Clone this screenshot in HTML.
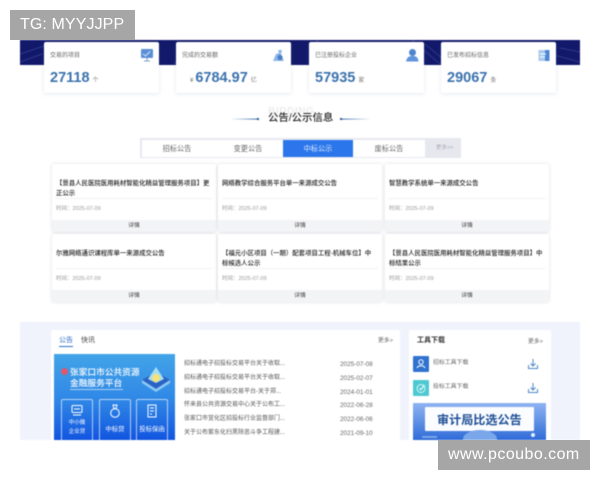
<!DOCTYPE html>
<html lang="zh"><head><meta charset="utf-8"><title>公告</title>
<style>
html,body{margin:0;padding:0;background:#fff}
#p{position:relative;width:600px;height:480px;overflow:hidden;background:#fff;font-family:"Liberation Sans","Noto Sans CJK SC",sans-serif;color:#444}
#b{position:absolute;left:0;top:0;width:600px;height:480px;filter:blur(.45px)}
.a{position:absolute;white-space:nowrap}
.stat{position:absolute;top:42px;width:115px;height:51px;background:#fff;border-radius:2px;box-shadow:0 1px 4px rgba(90,110,160,.16)}
.stat .l{position:absolute;left:6px;top:10px;font-size:6px;line-height:9px;color:#666;white-space:nowrap}
.stat .n{position:absolute;left:6px;top:28px;font-size:14.5px;line-height:17px;font-weight:bold;color:#3b72ad;white-space:nowrap}
.stat .n small{font-size:6px;font-weight:normal;color:#777;margin-left:3px}
.stat svg{position:absolute;left:96px;top:6px}
.c{position:absolute;width:164px;height:68px;background:#fff;box-shadow:0 0 3px rgba(80,90,120,.2);border-radius:2px;overflow:hidden}
.c .t{position:absolute;left:4px;top:15px;width:155px;font-size:6.4px;line-height:9.5px;color:#222;font-weight:500}
.c .ln{position:absolute;left:4px;right:4px;top:34px;height:1px;background:#f1f1f3}
.c .d{position:absolute;left:4px;top:41px;font-size:5.5px;line-height:8px;color:#999;white-space:nowrap}
.c .x{position:absolute;left:0;right:0;bottom:0;height:12px;background:#f3f4f6;text-align:center;font-size:5.8px;line-height:12px;color:#444}
.tab{position:absolute;top:140px;height:17px;width:70px;text-align:center;font-size:7.2px;line-height:17px;color:#666}
.li{position:absolute;left:184px;font-size:6px;line-height:9px;color:#555;white-space:nowrap}
.dt{position:absolute;left:340px;font-size:6.4px;line-height:9px;color:#666;white-space:nowrap}
.bx{position:absolute;top:399px;width:30px;height:41px;border:1px solid rgba(255,255,255,.65);border-radius:2px;color:#fff;text-align:center}
.bx svg{display:block;margin:4px auto 0}
</style></head><body>
<div id="p"><div id="b">

<div class="a" style="left:20px;top:40px;width:560px;height:25px;background:#12196b;overflow:hidden">
<svg width="560" height="25" style="position:absolute;left:0;top:0"><g stroke="#3e4f9d" stroke-width=".7" fill="none" opacity=".8"><path d="M0 14L30 4M0 22L22 14M154 24L170 8M290 24L312 2M296 0L330 24M392 0L420 24M540 8L560 12M530 14L560 22M405 4L424 20M156 6L180 18"/></g></svg>
</div>

<div class="stat" style="left:44px"><div class="l">交易的项目</div><div class="n">27118<small>个</small></div>
<svg width="14" height="15" viewBox="0 0 14 15"><rect x="1" y="1" width="12" height="9" rx="1" fill="#5b8ed6"/><path d="M3 6l2.5 2L10 3.5" stroke="#d6e6fa" fill="none"/><path d="M7 10v2.5M4 13h6" stroke="#7a9cc9"/></svg></div>
<div class="stat" style="left:176px"><div class="l">完成的交易额</div><div class="n"><small style="margin:0 2px 0 8px">¥</small>6784.97<small>亿</small></div>
<svg width="14" height="15" viewBox="0 0 14 15"><path d="M1 13L4 6l3-1-1-3 4 0-1 4 3 7z" fill="#8fb6e6"/><circle cx="8" cy="9.5" r="2.6" fill="#4a7fc7"/></svg></div>
<div class="stat" style="left:309px"><div class="l">已注册投标企业</div><div class="n">57935<small>家</small></div>
<svg width="14" height="15" viewBox="0 0 14 15"><circle cx="7.5" cy="4.5" r="3.5" fill="#4f85d0"/><path d="M1 13.5C2 9 4 8 7.5 8S13 9 13.5 13.5z" fill="#5f93dc"/></svg></div>
<div class="stat" style="left:441px"><div class="l">已发布招标信息</div><div class="n">29067<small>条</small></div>
<svg width="14" height="15" viewBox="0 0 14 15"><rect x="1.5" y="2" width="11" height="11" fill="#a9c9ef"/><rect x="8" y="2" width="4.5" height="11" fill="#4d86d3"/><path d="M3 6h6M3 9h5" stroke="#fff" stroke-width="1"/></svg></div>

<div class="a" style="left:268px;top:106px;font-size:10px;line-height:11px;font-weight:bold;color:#ececee;letter-spacing:.6px">BIDDING</div>
<div class="a" style="left:268px;top:112px;font-size:10.4px;line-height:14px;color:#222;font-weight:500">公告/公示信息</div>
<svg class="a" style="left:228px;top:115px" width="36" height="8"><defs><linearGradient id="g1"><stop offset="0" stop-color="#3b6ea8" stop-opacity="0"/><stop offset="1" stop-color="#2c5f9c"/></linearGradient></defs><rect x="2" y="3.6" width="29" height="1" fill="url(#g1)"/><rect x="29" y="3" width="2" height="2" fill="#2c5f9c"/></svg>
<svg class="a" style="left:338px;top:115px" width="36" height="8"><defs><linearGradient id="g2"><stop offset="0" stop-color="#2c5f9c"/><stop offset="1" stop-color="#3b6ea8" stop-opacity="0"/></linearGradient></defs><rect x="2" y="3.6" width="31" height="1" fill="url(#g2)"/><rect x="2" y="3" width="2" height="2" fill="#2c5f9c"/></svg>

<div class="a" style="left:140px;top:138px;width:321px;height:20px;background:#e6e8ee"></div>
<div class="a" style="left:142px;top:140px;width:283px;height:17px;background:#fff"></div>
<div class="tab" style="left:142px">招标公告</div>
<div class="tab" style="left:213px">变更公告</div>
<div class="tab" style="left:283px;background:#2a76ea;color:#dfeaff">中标公示</div>
<div class="tab" style="left:354px">废标公告</div>
<div class="a" style="left:436px;top:144px;font-size:5.5px;line-height:8px;color:#a8adb8">更多&gt;&gt;</div>

<div class="c" style="left:52px;top:164px"><div class="t">【景县人民医院医用耗材智能化精益管理服务项目】更正公示</div><div class="ln"></div><div class="d">时间：2025-07-09</div><div class="x">详情</div></div>
<div class="c" style="left:218px;top:164px"><div class="t">网络教学综合服务平台单一来源成交公告</div><div class="ln"></div><div class="d">时间：2025-07-09</div><div class="x">详情</div></div>
<div class="c" style="left:385px;top:164px"><div class="t">智慧教学系统单一来源成交公告</div><div class="ln"></div><div class="d">时间：2025-07-09</div><div class="x">详情</div></div>
<div class="c" style="left:52px;top:234px"><div class="t">尔雅网络通识课程库单一来源成交公告</div><div class="ln"></div><div class="d">时间：2025-07-09</div><div class="x">详情</div></div>
<div class="c" style="left:218px;top:234px"><div class="t">【福元小区项目（一期）配套项目工程-机械车位】中标候选人公示</div><div class="ln"></div><div class="d">时间：2025-07-09</div><div class="x">详情</div></div>
<div class="c" style="left:385px;top:234px"><div class="t">【景县人民医院医用耗材智能化精益管理服务项目】中标结果公示</div><div class="ln"></div><div class="d">时间：2025-07-09</div><div class="x">详情</div></div>

<div class="a" style="left:20px;top:322px;width:560px;height:118px;background:#f0f3fc"></div>
<div class="a" style="left:51px;top:330px;width:349px;height:110px;background:#fff;border-radius:2px 2px 0 0"></div>
<div class="a" style="left:409px;top:330px;width:142px;height:110px;background:#fff;border-radius:2px 2px 0 0"></div>

<div class="a" style="left:59px;top:336px;font-size:7px;line-height:10px;color:#2f6fc4">公告</div>
<div class="a" style="left:59px;top:346px;width:14px;height:1px;background:#2f6fc4"></div>
<div class="a" style="left:81px;top:336px;font-size:7px;line-height:10px;color:#444">快讯</div>
<div class="a" style="left:378px;top:337px;font-size:5.8px;line-height:8px;color:#666">更多&gt;</div>

<div class="a" style="left:54px;top:354px;width:121px;height:86px;background:linear-gradient(180deg,#42a4e8 0%,#2f86e6 55%,#1155e0 100%)"></div>
<div class="a" style="left:61px;top:368px;width:7px;height:7px;background:#e0566a;border-radius:50%"></div>
<div class="a" style="left:70px;top:366.5px;font-size:8.7px;line-height:11px;font-weight:500;color:#fff">张家口市公共资源</div>
<div class="a" style="left:70px;top:377.5px;font-size:8.7px;line-height:11px;font-weight:500;color:#fff">金融服务平台</div>
<div class="a" style="left:70px;top:389px;width:53px;height:1px;background:rgba(255,255,255,.6)"></div>
<svg class="a" style="left:141px;top:366px" width="30" height="27" viewBox="0 0 30 27"><path d="M1 14L15 6l14 8-14 9z" fill="#2b63c4"/><path d="M1 14v3l14 9 14-9v-3l-14 9z" fill="#8ec9f4"/><path d="M7 13L15 1l8 12-8 4z" fill="#a6dff0"/><circle cx="15" cy="12" r="4" fill="#f4e27a"/></svg>
<div class="bx" style="left:61px"><svg width="14" height="14" viewBox="0 0 14 14"><rect x="2" y="1.5" width="10" height="7" rx="1" fill="none" stroke="#fff"/><path d="M4 5h6M3 11h8" stroke="#fff"/></svg></div>
<div class="bx" style="left:99px"><svg width="14" height="14" viewBox="0 0 14 14"><circle cx="7" cy="9" r="4.3" fill="none" stroke="#fff"/><path d="M5 1h4L8 4.500H6z" fill="none" stroke="#fff"/></svg></div>
<div class="bx" style="left:136px"><svg width="12" height="14" viewBox="0 0 12 14"><path d="M2 1h8v12H2zM4 4h4M4 7h4M4 10h2" fill="none" stroke="#fff"/></svg></div>
<div class="a" style="left:61px;top:419px;width:32px;text-align:center;font-size:5.5px;line-height:8.5px;color:#fff">中小微<br>企业贷</div>
<div class="a" style="left:99px;top:426px;width:32px;text-align:center;font-size:6.4px;line-height:8px;color:#fff">中标贷</div>
<div class="a" style="left:136px;top:426px;width:32px;text-align:center;font-size:6.4px;line-height:8px;color:#fff">投标保函</div>

<div class="li" style="top:360px">招标通电子招投标交易平台关于收取...</div><div class="dt" style="top:360px">2025-07-08</div>
<div class="li" style="top:374px">招标通电子招投标交易平台关于收取...</div><div class="dt" style="top:374px">2025-02-07</div>
<div class="li" style="top:388px">招标通电子招投标交易平台-关于郑...</div><div class="dt" style="top:388px">2024-01-01</div>
<div class="li" style="top:401px">怀来县公共资源交易中心关于公布工...</div><div class="dt" style="top:401px">2022-06-28</div>
<div class="li" style="top:415px">张家口市宣化区招投标行业监督部门...</div><div class="dt" style="top:415px">2022-06-06</div>
<div class="li" style="top:429px">关于公布紫东化扫黑除恶斗争工程建...</div><div class="dt" style="top:429px">2021-09-10</div>

<div class="a" style="left:417px;top:336px;font-size:7px;line-height:10px;font-weight:bold;color:#333">工具下载</div>
<div class="a" style="left:528px;top:338px;font-size:5.8px;line-height:8px;color:#666">更多&gt;</div>
<div class="a" style="left:413px;top:356px;width:16px;height:16px;background:#2f72cf;border-radius:1px"></div>
<svg class="a" style="left:415px;top:358px" width="12" height="12" viewBox="0 0 12 12"><circle cx="6" cy="4" r="2.2" fill="none" stroke="#fff"/><path d="M2 10c1-3 7-3 8 0" fill="none" stroke="#fff"/></svg>
<div class="a" style="left:413px;top:380px;width:16px;height:16px;background:#4ec9d1;border-radius:1px"></div>
<svg class="a" style="left:415px;top:382px" width="12" height="12" viewBox="0 0 12 12"><circle cx="6" cy="6.500" r="4" fill="none" stroke="#d8f5f6"/><path d="M4.500 6.500l1.200 1.200L9.500 3" fill="none" stroke="#fff"/></svg>
<div class="a" style="left:433px;top:359px;font-size:5.9px;line-height:8px;color:#666">招标工具下载</div>
<div class="a" style="left:433px;top:383px;font-size:5.9px;line-height:8px;color:#666">投标工具下载</div>
<svg class="a" style="left:527px;top:358px" width="12" height="12" viewBox="0 0 12 12"><path d="M6 1v6.500M3.500 5.500L6 8l2.500-2.500M1.500 7v3.500h9V7" fill="none" stroke="#4f86c6"/></svg>
<svg class="a" style="left:527px;top:382px" width="12" height="12" viewBox="0 0 12 12"><path d="M6 1v6.500M3.500 5.500L6 8l2.500-2.500M1.500 7v3.500h9V7" fill="none" stroke="#4f86c6"/></svg>

<div class="a" style="left:413px;top:403px;width:133px;height:37px;background:linear-gradient(180deg,#8fb4f2,#2f6bd8);overflow:hidden">
<div style="position:absolute;left:12px;top:4px;width:109px;height:24px;background:#fafcff;border-radius:1px"></div>
<div style="position:absolute;left:50px;top:27px;width:34px;height:18px;background:#7aa7ea;border-radius:50%"></div>
<div style="position:absolute;left:9px;top:33px;width:15px;height:2px;background:#7aa7ea"></div>
<div style="position:absolute;left:118px;top:30px;width:4px;height:4px;background:#e6f0ff;border-radius:50%"></div>
<div style="position:absolute;left:24px;top:10px;font-size:12.1px;line-height:15px;font-weight:bold;color:#1f4f96;white-space:nowrap">审计局比选公告</div>
</div>

</div>
<div class="a" style="left:10px;top:10px;width:125px;height:30px;background:#a6a6a6;color:#fff;font-size:16px;line-height:30px;text-indent:10px;letter-spacing:.1px">TG: MYYJJPP</div>
<div class="a" style="left:438px;top:440px;width:152px;height:30px;background:#a6a6a6;color:#fff;font-size:16px;line-height:30px;text-indent:10px;letter-spacing:.45px">www.pcoubo.com</div>
</div>
</body></html>
